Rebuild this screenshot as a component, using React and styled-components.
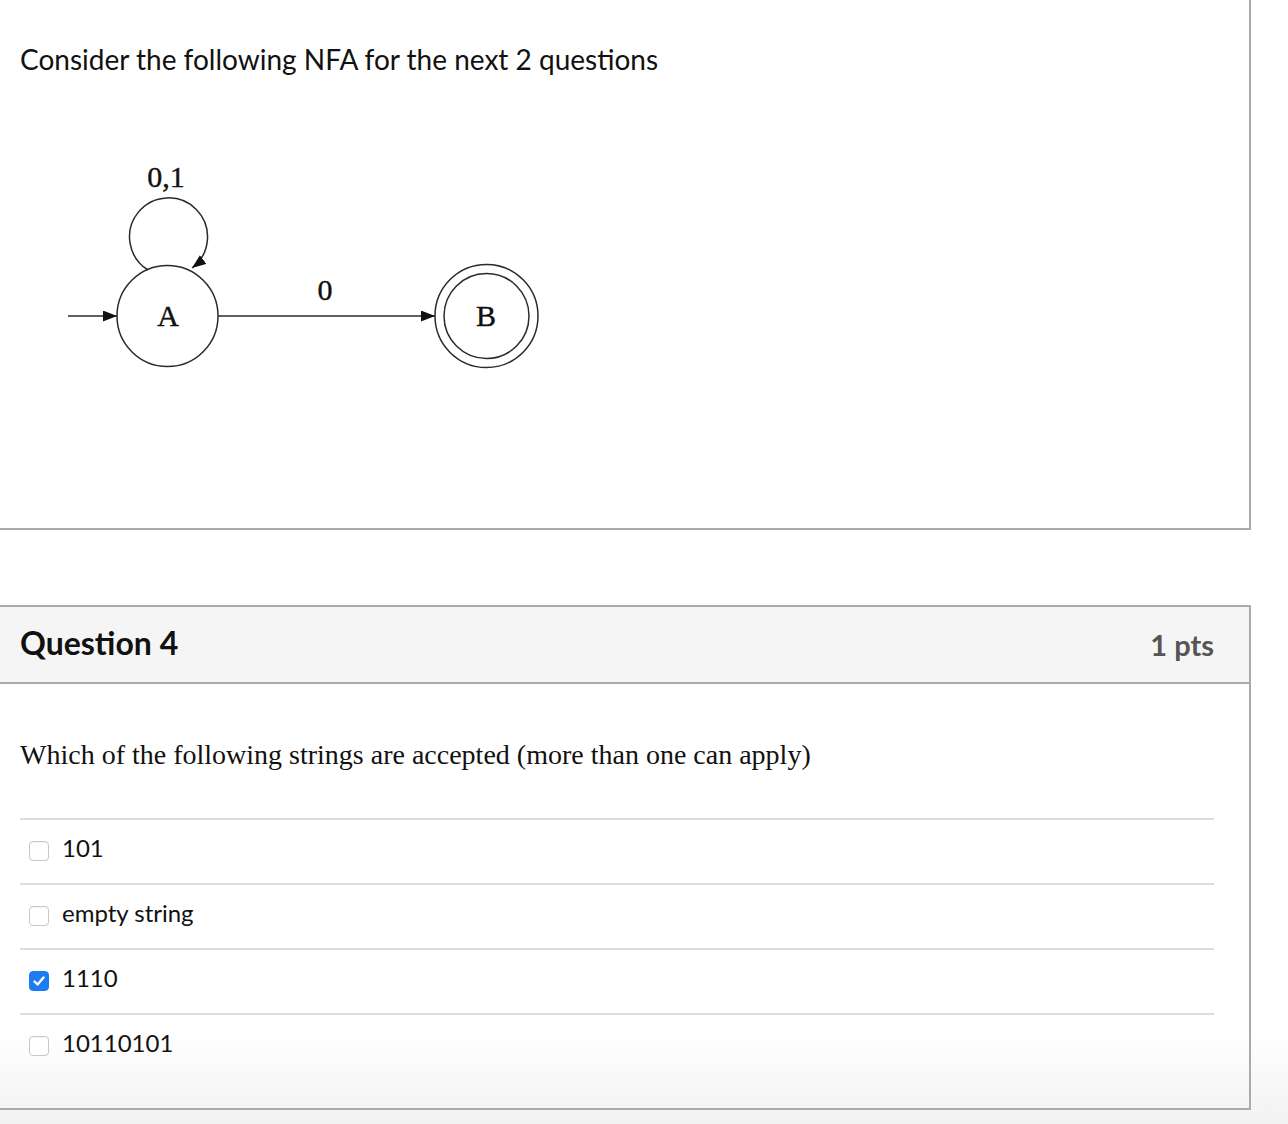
import styled, { createGlobalStyle } from 'styled-components';

const GlobalStyle = createGlobalStyle`
  html, body {
    margin: 0;
    padding: 0;
  }
  body {
    font-family: Lato, "Liberation Sans", sans-serif;
    color: #111;
  }
`;

const Page = styled.div`
  min-height: 1124px;
  overflow: hidden;
  background: linear-gradient(to bottom, #fff 0, #fff 1030px, #f2f2f2 1124px);
`;

const Panel = styled.section`
  width: 1249px;
  border-right: 2px solid #aaa;
  border-bottom: 2px solid #aaa;
  border-top: ${(p) => (p.$cut ? 'none' : '2px solid #aaa')};
  margin-top: ${(p) => (p.$cut ? '0' : '75px')};
`;

const Intro = styled.div`
  padding: 41px 20px 128px;
`;

const Prompt = styled.p`
  margin: 0;
  font-size: 28px;
  line-height: 36px;
`;

const Diagram = styled.svg`
  display: block;
  margin-top: 63px;
`;

const Header = styled.header`
  height: 75px;
  display: flex;
  align-items: center;
  justify-content: space-between;
  padding: 0 35px 0 20px;
  background: #f5f5f5;
  border-bottom: 2px solid #aaa;
`;

const Title = styled.h2`
  margin: 0 0 4px;
  font-size: 32px;
  font-weight: 700;
  color: #111;
`;

const Points = styled.span`
  font-size: 29px;
  font-weight: 700;
  color: #555;
`;

const Body = styled.div`
  padding: 53px 35px 30px 20px;
`;

const Question = styled.p`
  margin: 0;
  font-family: "Liberation Serif", "Times New Roman", serif;
  font-size: 28px;
  line-height: 36px;
  color: #111;
`;

const Answers = styled.ul`
  list-style: none;
  margin: 45px 0 0;
  padding: 0;
`;

const Answer = styled.li`
  height: 65px;
  box-sizing: border-box;
  padding: 0 0 8px 9px;
  display: flex;
  align-items: center;
  gap: 13px;
  border-top: 2px solid #ddd;
  font-size: 24px;
`;

const Box = styled.span`
  width: 20px;
  height: 20px;
  margin-top: 6px;
  box-sizing: border-box;
  border-radius: 4px;
  display: flex;
  align-items: center;
  justify-content: center;
  border: 1px solid ${(p) => (p.$checked ? '#1d7cf2' : '#c8c8c8')};
  background: ${(p) => (p.$checked ? '#1d7cf2' : '#fff')};
  box-shadow: ${(p) => (p.$checked ? 'none' : 'inset 0 1px 1px rgba(0,0,0,0.05)')};
`;

const Checkbox = ({ checked }) => (
  <Box $checked={checked}>
    {checked && (
      <svg width="14" height="14" viewBox="0 0 14 14">
        <polyline points="2.5,7.5 5.6,10.5 11.5,3.5" fill="none" stroke="#fff" strokeWidth="2.4" strokeLinecap="round" strokeLinejoin="round" />
      </svg>
    )}
  </Box>
);

const answers = [
  { label: '101', checked: false },
  { label: 'empty string', checked: false },
  { label: '1110', checked: true },
  { label: '10110101', checked: false },
];

const stroke = '#2a2a2a';

const Nfa = () => (
  <Diagram width="540" height="260" viewBox="20 140 540 260">
    <defs>
      <marker id="head" viewBox="0 0 14 11" refX="14" refY="5.5" markerWidth="14" markerHeight="11" markerUnits="userSpaceOnUse" orient="auto">
        <path d="M0,0 L14,5.5 L0,11 z" fill="#111" />
      </marker>
    </defs>
    <g fill="none" stroke={stroke} strokeWidth="1.5">
      <path d="M148,270 A39,39 0 1,1 192,268" markerEnd="url(#head)" />
      <circle cx="167.5" cy="316" r="50.5" />
      <circle cx="486.5" cy="316" r="51.5" />
      <circle cx="486.5" cy="316" r="42.5" />
      <line x1="68" y1="316" x2="117" y2="316" markerEnd="url(#head)" />
      <line x1="218" y1="316" x2="435" y2="316" markerEnd="url(#head)" />
    </g>
    <g fontFamily="'Liberation Serif', 'Times New Roman', serif" fontSize="30" fill="#111" textAnchor="middle" stroke="#111" strokeWidth="0.4">
      <text x="166" y="187">0,1</text>
      <text x="325" y="300">0</text>
      <text x="168" y="326">A</text>
      <text x="486" y="326">B</text>
    </g>
  </Diagram>
);

export default function App() {
  return (
    <Page>
      <GlobalStyle />
      <Panel $cut>
        <Intro>
          <Prompt>Consider the following NFA for the next 2 questions</Prompt>
          <Nfa />
        </Intro>
      </Panel>
      <Panel>
        <Header>
          <Title>Question 4</Title>
          <Points>1 pts</Points>
        </Header>
        <Body>
          <Question>Which of the following strings are accepted (more than one can apply)</Question>
          <Answers>
            {answers.map((a) => (
              <Answer key={a.label}>
                <Checkbox checked={a.checked} />
                {a.label}
              </Answer>
            ))}
          </Answers>
        </Body>
      </Panel>
    </Page>
  );
}
